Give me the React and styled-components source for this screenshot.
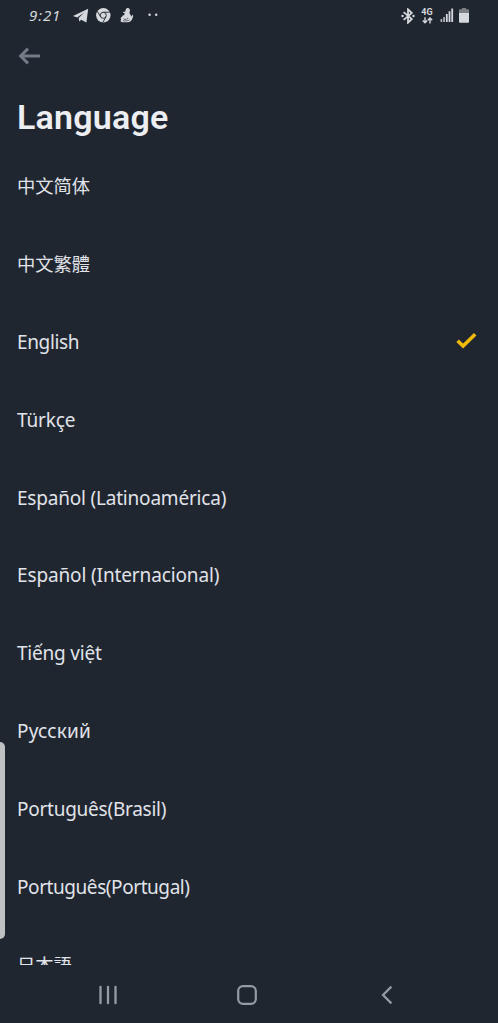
import styled, { createGlobalStyle } from "styled-components";

const GlobalStyle = createGlobalStyle`
  * {
    box-sizing: border-box;
  }
  body {
    margin: 0;
    background: #202630;
  }
`;
const Screen = styled.div`
  position: relative;
  display: flex;
  flex-direction: column;
  width: 498px;
  height: 1023px;
  overflow: hidden;
  background: #202630;
  color: #e0e3e9;
  font-family: "Noto Sans", "Noto Sans CJK SC", sans-serif;
`;
const StatusBar = styled.div`
  display: flex;
  justify-content: space-between;
  height: 31px;
  padding: 0 29px 0 29px;
  color: #d5d8dc;
`;
const StatusGroup = styled.div`
  display: flex;
  align-items: center;
`;
const Clock = styled.span`
  width: 44px;
  font-size: 15px;
  font-style: italic;
  letter-spacing: 0.9px;
  line-height: 31px;
`;
const Network = styled.div`
  display: flex;
  flex-direction: column;
  align-items: center;
  width: 14px;
  margin: 0 6px 0 5px;
  font-family: Roboto, sans-serif;
  font-size: 9px;
  font-weight: 700;
  line-height: 9px;
`;
const Battery = styled.svg`
  margin-left: 5px;
`;
const Header = styled.div`
  display: flex;
  align-items: center;
  height: 50px;
  padding-left: 18px;
`;
const Title = styled.h1`
  height: 65px;
  margin: 0;
  padding-left: 17px;
  color: #eceef2;
  font-family: Roboto, sans-serif;
  font-size: 34px;
  font-weight: 600;
  letter-spacing: 0.2px;
  line-height: 72px;
`;
const List = styled.ul`
  flex: 1;
  margin: 0;
  padding: 0;
  overflow: hidden;
  list-style: none;
`;
const Item = styled.li`
  display: flex;
  align-items: center;
  justify-content: space-between;
  height: 77.92px;
  padding: 0 21px 0 17px;
`;
const Label = styled.span`
  padding-top: ${(props) => (props.$cjk ? 0 : 2)}px;
  font-family: ${(props) =>
    props.$cjk
      ? `"Noto Sans CJK ${props.$cjk}", sans-serif`
      : `"Noto Sans", sans-serif`};
  font-size: ${(props) => (props.$cjk ? 18.3 : 19)}px;
  letter-spacing: ${(props) => props.$spacing || 0}px;
  line-height: 28px;
  white-space: nowrap;
`;
const NavBar = styled.div`
  display: grid;
  grid-template-columns: 1fr 1fr 1fr;
  align-items: center;
  justify-items: center;
  height: 58px;
  padding: 1px 41px 0 38px;
`;
// edge panel handle, floats above the list
const EdgeHandle = styled.div`
  position: absolute;
  top: 742px;
  left: 0;
  width: 5px;
  height: 197px;
  border-radius: 0 5px 5px 0;
  background: #bfc0c2;
`;

const languages = [
  { name: "中文简体", cjk: "SC" },
  { name: "中文繁體", cjk: "TC" },
  { name: "English", spacing: -0.35, selected: true },
  { name: "Türkçe", spacing: -0.15 },
  { name: "Español (Latinoamérica)", spacing: -0.2 },
  { name: "Español (Internacional)", spacing: -0.13 },
  { name: "Tiếng việt", spacing: -0.2 },
  { name: "Русский", spacing: 0.15 },
  { name: "Português(Brasil)", spacing: -0.25 },
  { name: "Português(Portugal)", spacing: -0.43 },
  { name: "日本語", cjk: "JP" },
];

function NotificationIcons() {
  return (
    <svg width="88" height="31" viewBox="0 0 88 31" fill="currentColor">
      <path d="M0 16 15.2 8.8 13.4 22.5 8.2 19.8 6.2 21.6 5.7 18 11.2 12.4 4.2 17.4Z" />
      <circle cx="30.3" cy="15.3" r="7.2" />
      <g fill="none" stroke="#202630" strokeWidth="0.9">
        <circle cx="30.3" cy="15.3" r="3" />
        <path d="M30.3 12.2H36.9M27.6 16.8 24.3 11.2M33 16.8 29.8 22.4" />
      </g>
      <path d="M53.8 8.2c1.6-.8 3.2.2 3.1 2 0 1.4-.5 2-.4 3 .2 1 1.6 1.6 1.8 3.2.7-.2.9-1.2.8-2 1.3.6 1.5 2.3.4 3.6-.4 2.4-2.3 4.3-5.3 4.3h-4.2c-2.4 0-3.1-1.5-1.8-2.6-1-.9-.5-2.4.8-2.6 0-1.5 1.2-2 2.4-1.8-.4-.8-.1-1.5.6-2-1-.1-1.7-.6-2.2-1.4 1.4 0 2.2-.3 2.7-.9 0-1.2.3-2.2 1.3-2.8Z" />
      <path
        d="M50.4 18.8c1.8 1.2 4.2.6 4.6-1M50 20.6c2 .7 5 .4 6.6-.8"
        fill="none"
        stroke="#202630"
        strokeWidth="0.6"
      />
      <circle cx="76.6" cy="14.8" r="1.25" />
      <circle cx="83.2" cy="14.8" r="1.25" />
    </svg>
  );
}

function BluetoothIcon() {
  return (
    <svg width="14" height="16" viewBox="0 0 14 16" fill="none">
      <path
        d="M2.6 4.1 10.8 11 7 14.7V1.3L10.8 5 2.6 11.9"
        stroke="currentColor"
        strokeWidth="1.8"
      />
      <circle cx="1.5" cy="8" r="1.2" fill="currentColor" />
      <circle cx="12.5" cy="8" r="1.2" fill="currentColor" />
    </svg>
  );
}

function DataArrows() {
  return (
    <svg width="11" height="7" viewBox="0 0 11 7" fill="none">
      <path
        d="M3 .2V5.6M.8 3.5 3 5.8 5.2 3.5M8 6.6V1.2M5.8 3.3 8 1 10.2 3.3"
        stroke="currentColor"
        strokeWidth="1.4"
      />
    </svg>
  );
}

function SignalIcon() {
  return (
    <svg width="14" height="15" viewBox="0 0 14 15" fill="currentColor">
      <rect x="0.5" y="11" width="1.7" height="3" opacity="0.8" />
      <rect x="3.2" y="9" width="1.7" height="5" opacity="0.8" />
      <rect x="5.9" y="6" width="1.8" height="8" />
      <rect x="8.6" y="3.2" width="1.8" height="10.8" />
      <rect x="11.3" y="0.5" width="1.8" height="13.5" />
    </svg>
  );
}

function BatteryIcon() {
  return (
    <Battery width="10" height="15" viewBox="0 0 10 15" fill="currentColor">
      <path d="M3 0h4v1.3h2.2q.8 0 .8.8V6H0V2.1q0-.8.8-.8H3Z" opacity="0.5" />
      <path d="M0 5h10v8.7q0 1-1 1H1q-1 0-1-1Z" />
    </Battery>
  );
}

function CheckIcon() {
  return (
    <svg width="21" height="18" viewBox="0 0 21 18" fill="none">
      <path d="M1.6 8.8 7.1 14.1 19.2 2.2" stroke="#f0b90b" strokeWidth="3.6" />
    </svg>
  );
}

function App() {
  return (
    <>
      <GlobalStyle />
      <Screen>
        <StatusBar>
          <StatusGroup>
            <Clock>9:21</Clock>
            <NotificationIcons />
          </StatusGroup>
          <StatusGroup>
            <BluetoothIcon />
            <Network>
              4G
              <DataArrows />
            </Network>
            <SignalIcon />
            <BatteryIcon />
          </StatusGroup>
        </StatusBar>
        <Header>
          <svg width="24" height="20" viewBox="0 0 24 20" fill="none">
            <path
              d="M22 10H2.5M10 2.6 2.6 10 10 17.4"
              stroke="#747b87"
              strokeWidth="2.9"
            />
          </svg>
        </Header>
        <Title>Language</Title>
        <List>
          {languages.map((item) => (
            <Item key={item.name}>
              <Label $cjk={item.cjk} $spacing={item.spacing}>
                {item.name}
              </Label>
              {item.selected && <CheckIcon />}
            </Item>
          ))}
        </List>
        <NavBar>
          <svg width="20" height="20" viewBox="0 0 20 20">
            <path
              d="M2.5 1.8V18.2M10 1.8V18.2M17.5 1.8V18.2"
              stroke="#949ba5"
              strokeWidth="2.3"
              strokeLinecap="round"
            />
          </svg>
          <svg width="20" height="20" viewBox="0 0 20 20" fill="none">
            <rect
              x="1.2"
              y="1.2"
              width="17.6"
              height="17.6"
              rx="4.8"
              stroke="#949ba5"
              strokeWidth="2.2"
            />
          </svg>
          <svg width="12" height="20" viewBox="0 0 12 20" fill="none">
            <path
              d="M10.4 1.6 2 10 10.4 18.4"
              stroke="#949ba5"
              strokeWidth="2.2"
            />
          </svg>
        </NavBar>
        <EdgeHandle />
      </Screen>
    </>
  );
}
export default App;
